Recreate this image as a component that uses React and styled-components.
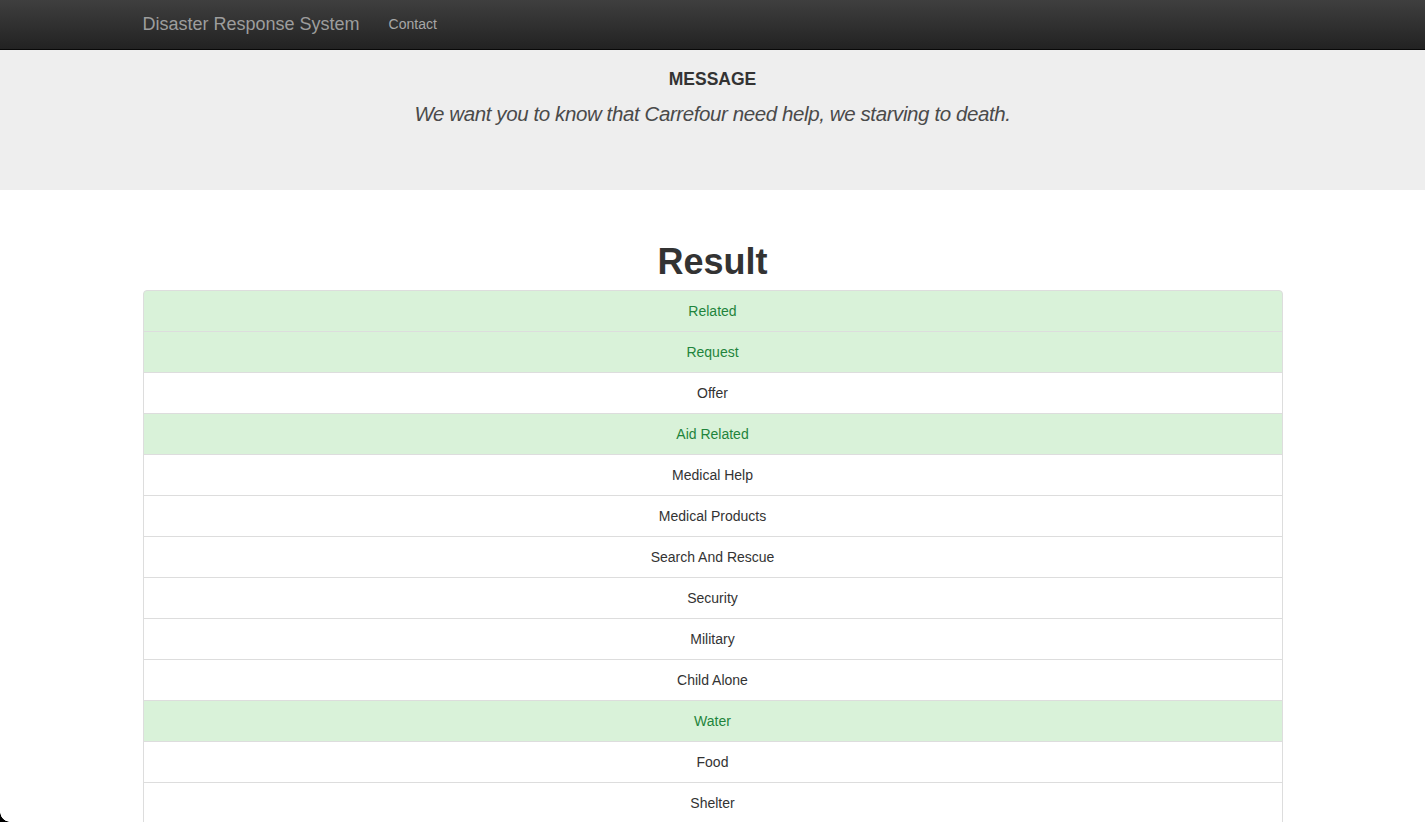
import React from "react"
import styled, { createGlobalStyle } from "styled-components"

const categories = [
  ["Related", true],
  ["Request", true],
  ["Offer", false],
  ["Aid Related", true],
  ["Medical Help", false],
  ["Medical Products", false],
  ["Search And Rescue", false],
  ["Security", false],
  ["Military", false],
  ["Child Alone", false],
  ["Water", true],
  ["Food", false],
  ["Shelter", false],
  ["Clothing", false],
  ["Money", false],
  ["Missing People", false],
  ["Refugees", false],
  ["Death", false],
  ["Other Aid", false],
  ["Infrastructure Related", false],
  ["Transport", false],
  ["Buildings", false],
  ["Electricity", false],
  ["Tools", false],
  ["Hospitals", false],
  ["Shops", false],
  ["Aid Centers", false],
  ["Other Infrastructure", false],
  ["Weather Related", false],
  ["Floods", false],
  ["Storm", false],
  ["Fire", false],
  ["Earthquake", false],
  ["Cold", false],
  ["Other Weather", false],
  ["Direct Report", false],
]

const App = () => {
  return (
    <>
      <GlobalStyle />
      <Navbar>
        <Container>
          <Brand href="#">Disaster Response System</Brand>
          <NavLink href="#">Contact</NavLink>
        </Container>
      </Navbar>

      <Jumbotron>
        <Container>
          <MessageTitle>MESSAGE</MessageTitle>
          <MessageText>
            We want you to know that Carrefour need help, we starving to death.
          </MessageText>
        </Container>
      </Jumbotron>

      <Container>
        <ResultTitle>Result</ResultTitle>
        <ListGroup>
          {categories.map(([name, hit]) => (
            <ListItem key={name} success={hit ? 1 : 0}>
              {name}
            </ListItem>
          ))}
        </ListGroup>
      </Container>

      <WindowCorner />
    </>
  )
}

const GlobalStyle = createGlobalStyle`
  html, body {
    margin: 0;
    padding: 0;
    background: #fff;
  }
  body {
    font-family: "Liberation Sans", Arial, sans-serif;
    font-size: 14px;
    line-height: 1.42857;
    color: #333;
  }
  * {
    box-sizing: border-box;
  }
`

const Container = styled.div`
  width: 1170px;
  margin: 0 auto;
  padding: 0 15px;
`

const Navbar = styled.nav`
  height: 50px;
  background: linear-gradient(to bottom, #3f3f3f 0%, #222 100%);
  border-bottom: 1px solid #080808;

  ${Container} {
    display: flex;
    align-items: center;
    height: 49px;
  }
`

const Brand = styled.a`
  font-size: 18px;
  line-height: 20px;
  color: #9d9d9d;
  text-decoration: none;
  padding-bottom: 2px;
`

const NavLink = styled.a`
  margin-left: 29px;
  font-size: 14px;
  line-height: 20px;
  color: #a7a7a7;
  text-decoration: none;
  padding-bottom: 1px;
`

const Jumbotron = styled.header`
  height: 140px;
  background: #eee;
  padding-top: 19px;
  text-align: center;
`

const MessageTitle = styled.h4`
  margin: 0;
  font-size: 17.5px;
  line-height: 20px;
  font-weight: 700;
  color: #333;
`

const MessageText = styled.p`
  margin: 10px 0 0;
  font-size: 20.5px;
  line-height: 30px;
  letter-spacing: -0.4px;
  font-style: italic;
  font-weight: 300;
  color: #4a4a4a;
`

const ResultTitle = styled.h1`
  margin: 52px 0 8px;
  font-size: 36px;
  line-height: 40px;
  font-weight: 700;
  text-align: center;
  color: #333;
`

const ListGroup = styled.ul`
  margin: 0 0 20px;
  padding: 0;
  list-style: none;
`

const ListItem = styled.li`
  display: block;
  padding: 10px 15px;
  margin-bottom: -1px;
  border: 1px solid #ddd;
  text-align: center;
  font-size: 14px;
  line-height: 20px;
  background: ${p => (p.success ? "#d9f2d9" : "#fff")};
  color: ${p => (p.success ? "#1f843c" : "#333")};

  &:first-child {
    border-top-left-radius: 4px;
    border-top-right-radius: 4px;
  }
  &:last-child {
    border-bottom-left-radius: 4px;
    border-bottom-right-radius: 4px;
  }
`

const WindowCorner = styled.div`
  position: fixed;
  left: 0;
  bottom: 0;
  width: 10px;
  height: 10px;
  background: radial-gradient(circle at 10px 0, transparent 9.5px, #000 10px);
  pointer-events: none;
`

export default App
